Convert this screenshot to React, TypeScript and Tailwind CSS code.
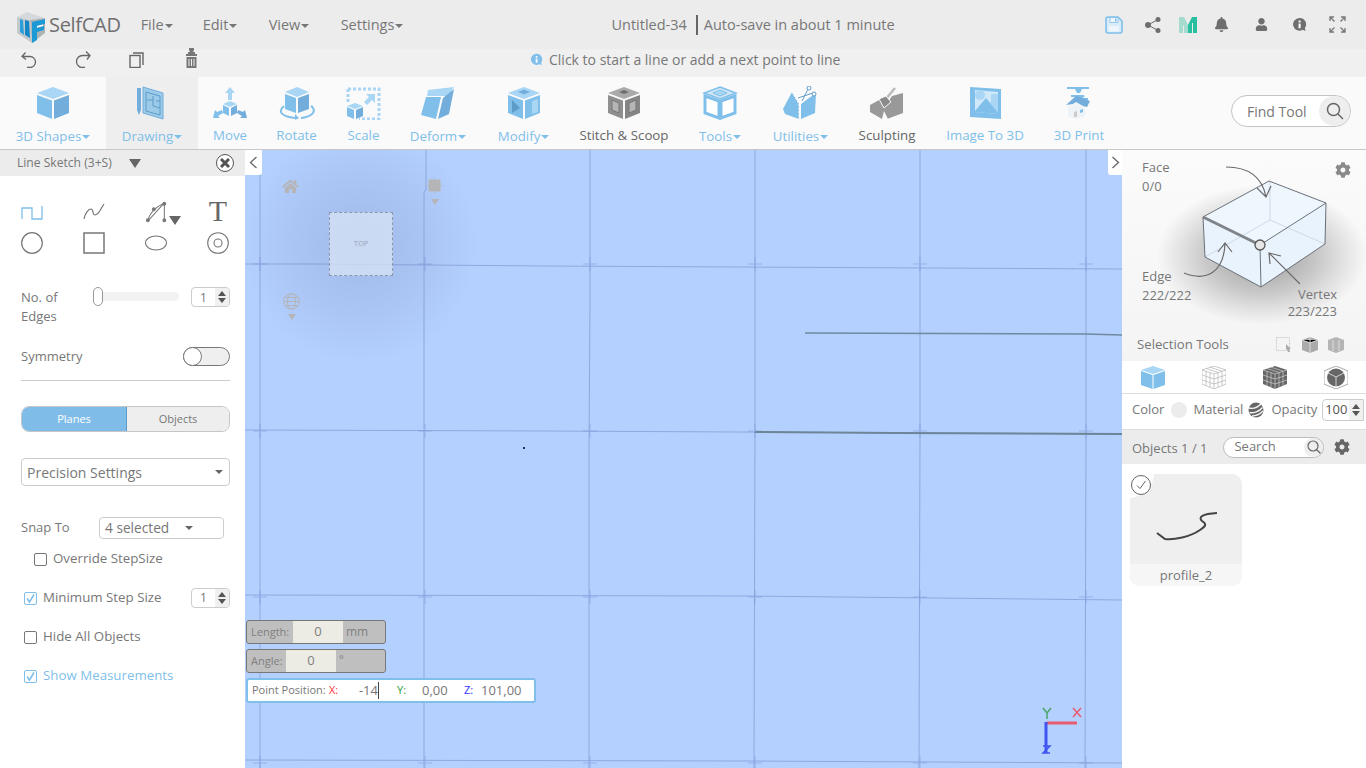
import { FaBell, FaCog, FaHome, FaUser } from "react-icons/fa";

const blue = "#7fbfea";
const light = "#a9d6f5";
const dark = "#72addb";
const grey = "#8f8f8f";

function Caret({ className = "" }: { className?: string }) {
  return <span className={`inline-block w-0 h-0 border-x-[4px] border-x-transparent border-t-[4px] border-t-current ml-[1px] align-middle ${className}`} />;
}

function CubeIcon() {
  return (
    <svg width="36" height="34" viewBox="0 0 36 34">
      <polygon points="18,1 34,7 18,13 2,7" fill={light} />
      <polygon points="2,9 17,14.5 17,33 2,27" fill={blue} />
      <polygon points="19,14.5 34,9 34,27 19,33" fill={dark} />
    </svg>
  );
}

function DrawingIcon() {
  return (
    <svg width="36" height="34" viewBox="0 0 36 34">
      <polygon points="9,1 29,7 29,33 9,27" fill="#9ccbea" stroke={dark} />
      <path d="M12 6l14 4v19l-14-4zM13 14h6v6M19 10v4M19 20l7 2M22 15h4" fill="none" stroke="#5d9bc8" strokeWidth="1" />
      <path d="M3 2h4v22l-2 5-2-5z" fill={dark} />
    </svg>
  );
}

function MoveIcon() {
  return (
    <svg width="36" height="34" viewBox="0 0 36 34">
      <path d="M18 1l5 6h-3v7h-4V7h-3z" fill={light} />
      <polygon points="18,15 25,18 18,21 11,18" fill={light} />
      <polygon points="11,19 17,22 17,30 11,27" fill={blue} />
      <polygon points="19,22 25,19 25,27 19,30" fill={dark} />
      <path d="M1 32l2-8 2 2 5-2 1 3-5 3 2 2z" fill={blue} />
      <path d="M35 32l-2-8-2 2-5-2-1 3 5 3-2 2z" fill={dark} />
    </svg>
  );
}

function RotateIcon() {
  return (
    <svg width="36" height="34" viewBox="0 0 36 34">
      <polygon points="18,1 30,6 18,11 6,6" fill={light} />
      <polygon points="6,8 17,12 17,27 6,23" fill={blue} />
      <polygon points="19,12 30,8 30,23 19,27" fill={dark} />
      <path d="M5 20c-6 5-3 9 5 11 4 1 7 1 9 1M22 32c9-1 15-5 12-10-.5-1-1-1.500-2-2" fill="none" stroke={blue} strokeWidth="2" />
      <path d="M16 28l4 4-4 2z" fill={blue} />
    </svg>
  );
}

function ScaleIcon() {
  return (
    <svg width="36" height="34" viewBox="0 0 36 34">
      <path d="M2 3h31v30H13M2 3v14" fill="none" stroke={light} strokeWidth="3" strokeDasharray="3 2" />
      <path d="M20 8h9v9l-3-3-5 5-3-3 5-5z" fill={light} />
      <polygon points="9,17 17,20 9,23 1,20" fill={light} />
      <polygon points="1,21 8,24 8,33 1,30" fill={blue} />
      <polygon points="10,24 17,21 17,30 10,33" fill={dark} />
    </svg>
  );
}

function DeformIcon() {
  return (
    <svg width="36" height="34" viewBox="0 0 36 34">
      <polygon points="8,4 34,1 28,10 7,10" fill={light} />
      <polygon points="6,11 21,11 16,33 1,29" fill={blue} />
      <polygon points="23,12 34,3 29,28 18,33" fill={dark} />
    </svg>
  );
}

function ModifyIcon() {
  return (
    <svg width="36" height="34" viewBox="0 0 36 34">
      <polygon points="18,1 34,7 18,13 2,7" fill={light} />
      <polygon points="12,6 18,3.500 24,6 18,8.500" fill={dark} />
      <polygon points="2,9 17,14.500 17,33 2,27" fill={blue} />
      <polygon points="6,14 14,22 6,27" fill="#5d9bc8" />
      <polygon points="19,14.500 34,9 34,27 19,33" fill={blue} />
      <polygon points="26,15 32,13 32,26 26,28" fill={light} />
    </svg>
  );
}

function StitchIcon() {
  return (
    <svg width="36" height="34" viewBox="0 0 36 34">
      <polygon points="18,1 34,7 18,13 2,7" fill="#aaa" />
      <polygon points="13,6 18,4 23,6 18,8" fill="#6e6e6e" />
      <polygon points="2,9 17,14.500 17,33 2,27" fill={grey} />
      <path d="M6 14l7 3v10l-7-3z" fill="#b5b5b5" stroke="#777" />
      <polygon points="19,14.500 34,9 34,27 19,33" fill="#858585" />
      <path d="M23 17l7-3v10l-7 3z" fill="#b5b5b5" stroke="#777" />
    </svg>
  );
}

function ToolsIcon() {
  return (
    <svg width="36" height="34" viewBox="0 0 36 34">
      <polygon points="18,1 34,7 18,13 2,7" fill="#cfe6f7" stroke={blue} strokeWidth="1.500" />
      <polygon points="11,7 18,4 25,7 18,10" fill={light} stroke={blue} />
      <polygon points="3,10 17,15 17,32 3,27" fill="#fff" stroke={blue} strokeWidth="3" />
      <polygon points="19,15 33,10 33,27 19,32" fill="#fff" stroke={blue} strokeWidth="3" />
    </svg>
  );
}

function UtilitiesIcon() {
  return (
    <svg width="36" height="34" viewBox="0 0 36 34">
      <polygon points="9,6 0,23 2,28 16,33 16,18" fill={blue} />
      <polygon points="18,18 26,12 33,7 32,27 18,33" fill={blue} />
      <path d="M9 6l7 12v15" stroke="#fff" strokeDasharray="2 1.500" fill="none" />
      <path d="M14 12l16-4M18 15l8-14" stroke="#fff" strokeWidth="3" />
      <path d="M15 12l15-5M19 15l7-14" stroke="#5d9bc8" strokeWidth="1" />
      <circle cx="31" cy="8" r="2" fill="#fff" stroke="#5d9bc8" />
      <circle cx="26" cy="2" r="2" fill="#fff" stroke="#5d9bc8" />
    </svg>
  );
}

function SculptIcon() {
  return (
    <svg width="36" height="34" viewBox="0 0 36 34">
      <path d="M1 19L12 13L17 19L23 10L34 7V27L18 33L13 33L1 26Z" fill="#999" />
      <path d="M16 14L26 2" stroke="#bbb" strokeWidth="2.500" />
      <polygon points="10,13 17,10 22,16 15,22" fill="#8a8a8a" stroke="#fafafa" />
      <path d="M13 33l2-8 4 8z" fill="#fafafa" />
    </svg>
  );
}

function ImageIcon() {
  return (
    <svg width="36" height="34" viewBox="0 0 36 34">
      <polygon points="3,1 34,3 34,33 3,31" fill={blue} />
      <polygon points="8,4 31,6 31,28 8,26" fill="#cfe8fa" />
      <path d="M8 25l11-13 12 14v2L8 26z" fill={blue} />
      <path d="M24 8h7v19l-7-9z" fill={light} />
      <circle cx="13" cy="9" r="5" fill={light} />
    </svg>
  );
}

function PrintIcon() {
  return (
    <svg width="36" height="34" viewBox="0 0 36 34">
      <path d="M6 1h22v2H21l-2 4h-3l-2-4H6z" fill={blue} />
      <path d="M10 10h13l-7 3h11" fill="none" stroke={blue} strokeWidth="2" />
      <polygon points="5,19 15,10 29,15 26,21 12,18" fill={dark} />
      <polygon points="7,21 15,16 24,21 24,30 15,33 7,30" fill="#eef3f7" />
      <path d="M13 26l3-1v6l-3 0z" fill="#ccc" />
      <path d="M19 24l3-1v3l-3 1z" fill={blue} />
    </svg>
  );
}

const tools = [
  { w: "w-[106px]", label: "3D Shapes", icon: <CubeIcon />, caret: true },
  { w: "w-[92px]", label: "Drawing", icon: <DrawingIcon />, caret: true, active: true },
  { w: "w-[64px]", label: "Move", icon: <MoveIcon /> },
  { w: "w-[69px]", label: "Rotate", icon: <RotateIcon /> },
  { w: "w-[65px]", label: "Scale", icon: <ScaleIcon /> },
  { w: "w-[84px]", label: "Deform", icon: <DeformIcon />, caret: true },
  { w: "w-[87px]", label: "Modify", icon: <ModifyIcon />, caret: true },
  { w: "w-[114px]", label: "Stitch & Scoop", icon: <StitchIcon />, dim: true },
  { w: "w-[78px]", label: "Tools", icon: <ToolsIcon />, caret: true },
  { w: "w-[83px]", label: "Utilities", icon: <UtilitiesIcon />, caret: true },
  { w: "w-[90px]", label: "Sculpting", icon: <SculptIcon />, dim: true },
  { w: "w-[106px]", label: "Image To 3D", icon: <ImageIcon /> },
  { w: "w-[82px]", label: "3D Print", icon: <PrintIcon /> },
];

function InfoBubble({ color, size }: { color: string; size: number }) {
  return (
    <svg width={size} height={size} viewBox="0 0 16 16">
      <path d="M8 1a6.800 6.800 0 1 0 3.500 12.600L14.500 15l-.8-3.200A6.800 6.800 0 0 0 8 1z" fill={color} />
      <rect x="7" y="7" width="2.200" height="5" fill="#fff" />
      <rect x="7" y="3.800" width="2.200" height="2" fill="#fff" />
    </svg>
  );
}

function Header() {
  return (
    <div className="h-[49px] bg-[#ececec] flex items-center text-[#777] shrink-0">
      <svg width="32" height="37" viewBox="0 0 32 37" className="ml-[16px] mt-[1px]">
        <polygon points="1,10 11,5 29,11 14,13" fill="#d6d9db" />
        <polygon points="1,10 14,13 16,36 1,26" fill="#c3c8cb" />
        <polygon points="14,13 29,11 29,26 16,36" fill="#aeb3b6" />
        <polygon points="4,12 7,13 8,28 4,25" fill="#2a9fdc" />
        <polygon points="9,13 13,14 14,31 9,28" fill="#1486c8" />
        <path d="M16 15l13-3v5l-8 2v2l7-2v4l-7 2v8l-5 3z" fill="#1c9ad6" />
        <path d="M21 19l6-1.500v1.500l-6 1.500z" fill="#fff" />
      </svg>
      <span className="text-[20px] tracking-[-0.3px] ml-[1px] text-[#6f6f6f] leading-none">SelfCAD</span>
      <div className="flex text-[14.500px] ml-[20px]">
        <span className="w-[62px]">File<Caret /></span>
        <span className="w-[66px]">Edit<Caret /></span>
        <span className="w-[72px]">View<Caret /></span>
        <span>Settings<Caret /></span>
      </div>
      <div className="flex items-center text-[14.500px] ml-[208px]">
        <span>Untitled-34</span>
        <span className="w-[2px] h-[20px] bg-[#666] ml-[9px] mr-[6px]" />
        <span>Auto-save in about 1 minute</span>
      </div>
      <div className="flex items-center ml-auto relative h-full w-[265px]">
        <svg width="18" height="18" viewBox="0 0 18 18" className="ml-[4px]">
          <path d="M1 3a2 2 0 0 1 2-2h10l4 4v10a2 2 0 0 1-2 2H3a2 2 0 0 1-2-2z" fill="#d9ecfa" stroke={blue} strokeWidth="1.600" />
          <rect x="4" y="10" width="10" height="5.500" fill="#eef6fc" />
          <rect x="5" y="1.500" width="8" height="5" fill="#eef6fc" stroke={blue} strokeWidth="0.800" />
          <rect x="10" y="2.500" width="1.500" height="3" fill={blue} />
        </svg>
        <svg width="18" height="18" viewBox="0 0 18 18" className="ml-[21px]">
          <path d="M14 3.500L4 9l10 5.500" fill="none" stroke="#6e6e6e" strokeWidth="1" />
          <circle cx="14" cy="3.500" r="2.500" fill="#6e6e6e" />
          <circle cx="4" cy="9" r="3" fill="#6e6e6e" />
          <circle cx="14" cy="14.500" r="2.500" fill="#6e6e6e" />
        </svg>
        <svg width="18" height="16" viewBox="0 0 18 16" className="ml-[17px]">
          <path d="M0 0h5l4 8v8H5V9L4 8v8H0z" fill="#a5dccf" />
          <path d="M18 0h-5L9 8v8h4V6h1v10h4z" fill="#27bfa0" />
        </svg>
        <FaBell size={15} color="#6e6e6e" className="ml-[17px]" />
        <FaUser size={13} color="#6e6e6e" className="ml-[26px]" />
        <span className="ml-[24px] flex"><InfoBubble color="#6e6e6e" size={15} /></span>
        <svg width="17" height="17" viewBox="0 0 17 17" className="ml-[22px]" fill="none" stroke="#777" strokeWidth="1.300">
          <path d="M1 5V1h4M1 1l4.500 4.500M12 1h4v4M16 1l-4.500 4.500M1 12v4h4M1 16l4.500-4.500M16 12v4h-4M16 16l-4.500-4.500" />
        </svg>
      </div>
    </div>
  );
}

function ActionBar() {
  return (
    <div className="h-[28px] bg-[#f0f0f0] flex items-center pb-[7px] text-[#777] shrink-0">
      <div className="flex pl-[2px]">
        <div className="w-[54px] flex justify-center">
          <svg width="16" height="17" viewBox="0 0 16 17" fill="none" stroke="#666" strokeWidth="1.300">
            <path d="M1 5.500h8a5.500 5.500 0 0 1 0 11H6M4.500 1.500L1 5.500l4 3" />
          </svg>
        </div>
        <div className="w-[54px] flex justify-center">
          <svg width="16" height="17" viewBox="0 0 16 17" fill="none" stroke="#666" strokeWidth="1.300">
            <path d="M15 4.500H7.500a6 6 0 0 0 0 12H10M11 .5l4 4-3 4" />
          </svg>
        </div>
        <div className="w-[54px] flex justify-center">
          <svg width="16" height="17" viewBox="0 0 16 17" fill="none" stroke="#666" strokeWidth="1.400">
            <rect x="1" y="4.500" width="10" height="12" />
            <path d="M4 2h10v12" />
          </svg>
        </div>
        <div className="w-[54px] flex justify-center -mt-[3px]">
          <svg width="13" height="21" viewBox="0 0 13 21">
            <path d="M4 0h5v2l-1 2h2v2H3V4h2L4 2z" fill="#777" />
            <rect x="1" y="6" width="11" height="2" fill="#777" />
            <path d="M1.500 9h10v11h-10z" fill="#777" />
            <path d="M4 11v7M6.500 11v7M9 11v7" stroke="#f0f0f0" strokeWidth="1" />
          </svg>
        </div>
      </div>
      <div className="flex items-center ml-[312px] text-[14px]">
        <InfoBubble color={blue} size={13} />
        <span className="ml-[6px]">Click to start a line or add a next point to line</span>
      </div>
    </div>
  );
}

function Toolbar() {
  return (
    <div className="h-[73px] bg-[#fafafa] border-b border-[#c8c8c8] flex shrink-0 relative">
      {tools.map((t) => (
        <div key={t.label} className={`${t.w} flex flex-col items-center pt-[9px] shrink-0 ${t.active ? "bg-[#eeeeee]" : ""}`}>
          <div className="h-[34px] flex items-center justify-center">{t.icon}</div>
          <span className={`text-[13.300px] leading-[18px] whitespace-nowrap ${t.caret ? "mt-[7px]" : "mt-[6px]"} ${t.dim ? "text-[#666]" : "text-[#7fbfea]"}`}>
            {t.label}
            {t.caret && <Caret />}
          </span>
        </div>
      ))}
      <div className="ml-auto mr-[15px] mt-[18px] w-[120px] h-[32px] rounded-full border border-[#c4c4c4] bg-white flex items-center overflow-hidden text-[14px] text-[#777]">
        <span className="pl-[15px]">Find Tool</span>
        <span className="ml-auto w-[31px] h-full bg-[#eeeeee] rounded-full flex items-center justify-center">
          <svg width="18" height="18" viewBox="0 0 18 18" fill="none" stroke="#666" strokeWidth="1.500">
            <circle cx="7.500" cy="7.500" r="6" />
            <path d="M12 12l5 5" />
          </svg>
        </span>
      </div>
    </div>
  );
}

function Stepper({ value, wide = false }: { value: string; wide?: boolean }) {
  return (
    <div className={`${wide ? "w-[42px] h-[22px] text-[13px] text-[#555] rounded-l-[4px]" : "w-[39px] h-[20px] text-[12px] text-[#777] rounded-[4px]"} border border-[#ccc] flex items-center overflow-hidden bg-white shrink-0`}>
      <span className="flex-1 text-center">{value}</span>
      <span className="w-[14px] h-full bg-[#f0f0f0] flex flex-col items-center justify-center gap-[2px]">
        <span className="w-0 h-0 border-x-[4px] border-x-transparent border-b-[5px] border-b-[#555]" />
        <span className="w-0 h-0 border-x-[4px] border-x-transparent border-t-[5px] border-t-[#555]" />
      </span>
    </div>
  );
}

function Check({ on, label, className = "" }: { on?: boolean; label: string; className?: string }) {
  return (
    <div className={`flex items-center h-[20px] text-[13.300px] ${className}`}>
      <span className={`w-[13px] h-[13px] border rounded-[2px] flex items-center justify-center mr-[6px] bg-white ${on ? "border-[#7fbfea]" : "border-[#777]"}`}>
        {on && (
          <svg width="11" height="11" viewBox="0 0 11 11" fill="none" stroke="#7fbfea" strokeWidth="1.600">
            <path d="M2 5.500l2.500 3.500L9 1.500" />
          </svg>
        )}
      </span>
      <span>{label}</span>
    </div>
  );
}

function LeftPanel() {
  return (
    <div className="w-[245px] shrink-0 bg-white text-[#777]">
      <div className="h-[26px] bg-[#ececec] flex items-center pl-[17px] pr-[11px] text-[12.100px]">
        <span>Line Sketch (3+S)</span>
        <span className="ml-[17px] w-0 h-0 border-x-[6px] border-x-transparent border-t-[9px] border-t-[#666]" />
        <span className="ml-auto w-[18px] h-[18px] rounded-full bg-white border-[1.500px] border-[#555] flex items-center justify-center">
          <svg width="10" height="10" viewBox="0 0 10 10" stroke="#555" strokeWidth="3">
            <path d="M1 1l8 8M9 1l-8 8" />
          </svg>
        </span>
      </div>
      <div className="pl-[21px] pr-[15px] pt-[24px]">
        <div className="flex justify-between w-[208px]">
          <svg width="22" height="22" viewBox="0 0 22 22" fill="none" stroke={blue} strokeWidth="1.300">
            <path d="M1 19V8h10v11h10V6" />
          </svg>
          <svg width="22" height="22" viewBox="0 0 22 22" fill="none" stroke="#777" strokeWidth="1.200">
            <path d="M1 19c1-5 4-10 7-10 3 0 1 6 4 6 4 0 6-7 9-11" />
          </svg>
          <span className="relative w-[22px] h-[22px]">
            <svg width="24" height="22" viewBox="0 0 24 24" fill="none" stroke="#777" strokeWidth="1.100" className="absolute left-0 top-[1px]">
              <path d="M2 22C3 14 10 7 20 2L20 22M2 22L20 2" />
              <circle cx="2" cy="21" r="1.500" fill="#777" />
              <circle cx="8.500" cy="9" r="1.500" fill="#777" />
              <circle cx="20" cy="3" r="1.500" fill="#777" />
              <circle cx="20" cy="21" r="1.500" fill="#777" />
            </svg>
            <span className="absolute left-[24px] top-[16px] w-0 h-0 border-x-[6px] border-x-transparent border-t-[9px] border-t-[#666]" />
          </span>
          <span className="w-[22px] h-[22px] font-['Liberation_Serif',serif] text-[30px] leading-[22px] text-center text-[#666]">T</span>
        </div>
        <div className="flex justify-between w-[208px] mt-[10px]">
          <svg width="22" height="22" viewBox="0 0 22 22" fill="none" stroke="#777" strokeWidth="1.200">
            <circle cx="11" cy="11" r="10.300" />
          </svg>
          <svg width="22" height="22" viewBox="0 0 22 22" fill="none" stroke="#777" strokeWidth="1.500">
            <rect x="1" y="1" width="20" height="20" />
          </svg>
          <svg width="22" height="22" viewBox="0 0 22 22" fill="none" stroke="#777" strokeWidth="1.100">
            <ellipse cx="11" cy="11" rx="10.500" ry="7" />
          </svg>
          <svg width="22" height="22" viewBox="0 0 22 22" fill="none" stroke="#777" strokeWidth="1.100">
            <circle cx="11" cy="11" r="10.300" />
            <circle cx="11" cy="11" r="4" />
          </svg>
        </div>

        <div className="flex items-start mt-[33px] h-[39px] text-[13px] leading-[19px]">
          <span className="w-[72px] pt-[1px]">No. of Edges</span>
          <span className="relative w-[86px] h-[9px] bg-[#f2f2f2] rounded-full mt-[5px]">
            <span className="absolute left-0 -top-[5px] w-[10px] h-[19px] rounded-[5px] border border-[#999] bg-white" />
          </span>
          <span className="ml-auto"><Stepper value="1" /></span>
        </div>

        <div className="flex items-center mt-[21px] h-[19px] text-[13px]">
          <span>Symmetry</span>
          <span className="ml-auto w-[47px] h-[19px] rounded-full border border-[#777] bg-[#efefef] relative">
            <span className="absolute -left-[1px] -top-[1px] w-[19px] h-[19px] rounded-full border border-[#777] bg-white" />
          </span>
        </div>
        <div className="mt-[14px] h-px bg-[#ccc]" />

        <div className="flex mt-[25px] h-[26px] text-[11px] rounded-[8px] overflow-hidden border border-[#c6c6c6]">
          <span className="w-[105px] bg-[#7fbde8] text-white flex items-center justify-center border-r border-[#5d9bc8]">Planes</span>
          <span className="flex-1 bg-[#eeeeee] flex items-center justify-center">Objects</span>
        </div>

        <div className="mt-[26px] h-[28px] border border-[#ccc] rounded-[4px] flex items-center pl-[5px] pr-[6px] text-[14px]">
          <span>Precision Settings</span>
          <Caret className="ml-auto text-[#666]" />
        </div>

        <div className="flex items-center mt-[31px] h-[22px] text-[13px]">
          <span className="w-[78px]">Snap To</span>
          <span className="w-[125px] h-[22px] border border-[#ccc] rounded-[4px] flex items-center pl-[5px] text-[13.700px]">
            4 selected
            <Caret className="ml-[16px] text-[#666]" />
          </span>
        </div>
        <Check label="Override StepSize" className="mt-[10px] ml-[13px]" />
        <div className="flex items-center mt-[19px] h-[20px]">
          <Check on label="Minimum Step Size" className="ml-[3px]" />
          <span className="ml-auto"><Stepper value="1" /></span>
        </div>
        <Check label="Hide All Objects" className="mt-[19px] ml-[3px]" />
        <Check on label="Show Measurements" className="mt-[19px] ml-[3px] text-[#7fbfea]" />
      </div>
    </div>
  );
}

function CanvasLines() {
  return (
    <svg className="absolute inset-0" width="877" height="618" viewBox="0 0 877 618" fill="none">
      <g stroke="#8fa8e0" strokeWidth="1">
        <path d="M15 0V618" />
        <path d="M181 0V40L179 42V618" />
        <path d="M345 0V150L344 300V618" />
        <path d="M510 0V280L509 618" />
        <path d="M675 0V290L674 618" />
        <path d="M841 0V290L840 618" />
        <path d="M0 114L70 114 300 116 877 119" />
        <path d="M0 280L300 281 877 284" />
        <path d="M0 445L500 446 877 450" />
        <path d="M0 610L500 611 877 613" />
      </g>
      <g stroke="#7f97d6">
        {[15, 180, 345, 510, 675, 841].flatMap((x, i) =>
          [114, 280, 445, 610].map((y, j) => (
            <path key={`${i}-${j}`} d={`M${x - 7} ${y + j}h14M${x} ${y + j - 7}v14`} strokeWidth="1.500" opacity="0.350" />
          ))
        )}
      </g>
      <path d="M560 183L840 184 877 185" stroke="#6f8a9e" strokeWidth="1.500" />
      <path d="M510 282L650 283 877 284" stroke="#6c8597" strokeWidth="2" />
      <rect x="278" y="297" width="2" height="2" fill="#1d2a6b" />
    </svg>
  );
}

function Canvas() {
  return (
    <div className="flex-1 relative bg-[#b4d0fe] overflow-hidden">
      <CanvasLines />
      <div className="absolute left-[-25px] top-[-35px] w-[280px] h-[260px] bg-[radial-gradient(circle,rgba(110,130,180,0.3),rgba(110,130,180,0.14)_35%,transparent_62%)]" />
      <div className="absolute left-0 top-0 w-[17px] h-[25px] bg-white rounded-br-[3px] flex items-center justify-center">
        <svg width="9" height="13" viewBox="0 0 9 13" fill="none" stroke="#666" strokeWidth="1.300"><path d="M7.500 1L1.500 6.500l6 5.500" /></svg>
      </div>
      <div className="absolute right-0 top-0 w-[14px] h-[25px] bg-white rounded-bl-[3px] flex items-center justify-center">
        <svg width="9" height="13" viewBox="0 0 9 13" fill="none" stroke="#666" strokeWidth="1.300"><path d="M1.500 1l6 5.500-6 5.500" /></svg>
      </div>
      <FaHome size={17} color="#b5b5b8" className="absolute left-[37px] top-[28px]" />
      <div className="absolute left-[181px] top-[27px] flex flex-col items-center">
        <svg width="17" height="17" viewBox="0 0 17 17">
          <path d="M8.500 0v17M0 8.500h17" stroke="#b5b5b8" strokeWidth="0.600" />
          <rect x="2.500" y="2.500" width="12" height="12" fill="#b5b5b8" />
        </svg>
        <span className="mt-[5px] w-0 h-0 border-x-[4px] border-x-transparent border-t-[6px] border-t-[#b5b5b8]" />
      </div>
      <div className="absolute left-[38px] top-[143px] flex flex-col items-center">
        <svg width="17" height="17" viewBox="0 0 17 17" fill="none" stroke="#b5b5b8">
          <circle cx="8.500" cy="8.500" r="7.800" />
          <ellipse cx="8.500" cy="8.500" rx="4" ry="7.800" />
          <path d="M1 8.500h15M2 4.500h13M2 12.500h13" />
        </svg>
        <span className="mt-[4px] w-0 h-0 border-x-[4px] border-x-transparent border-t-[6px] border-t-[#b5b5b8]" />
      </div>
      <div className="absolute left-[84px] top-[62px] w-[64px] h-[64px] bg-[#d8e4f6]/75 border border-dashed border-[#8d96ad] flex items-center justify-center text-[7.500px] text-[#98a2bd]">TOP</div>

      <div className="absolute left-[1px] top-[470px] flex flex-col gap-[5px] text-[#808080] text-[11px]">
        <div className="w-[140px] h-[24px] bg-[#bfbfbf] border border-[#777] rounded-[3px] flex items-center overflow-hidden">
          <span className="w-[46px] pl-[4px]">Length:</span>
          <span className="w-[50px] h-full bg-[#ecebe4] flex items-center justify-center text-[13px]">0</span>
          <span className="pl-[3px] text-[12px]">mm</span>
        </div>
        <div className="w-[140px] h-[24px] bg-[#bfbfbf] border border-[#777] rounded-[3px] flex items-center overflow-hidden">
          <span className="w-[39px] pl-[4px]">Angle:</span>
          <span className="w-[50px] h-full bg-[#ecebe4] flex items-center justify-center text-[13px]">0</span>
          <span className="pl-[3px] -mt-[4px]">°</span>
        </div>
        <div className="w-[290px] h-[25px] bg-white border-2 border-[#7fbfea] rounded-[3px] flex items-center text-[#777]">
          <span className="pl-[4px] w-[81px] text-[11px] whitespace-nowrap">Point Position:</span>
          <span className="text-[#f33] text-[11px] w-[16px]">X:</span>
          <span className="w-[22px] text-right text-[13px] ml-[12px] border-r border-[#444] leading-[17px]">-14</span>
          <span className="text-[#2a9a3a] text-[11px] ml-[18px] w-[10px]">Y:</span>
          <span className="text-[13px] ml-[15px] w-[28px]">0,00</span>
          <span className="text-[#33f] text-[11px] ml-[14px] w-[12px]">Z:</span>
          <span className="text-[13px] ml-[5px]">101,00</span>
        </div>
      </div>

      <svg className="absolute left-[795px] top-[556px]" width="45" height="50" viewBox="0 0 45 50">
        <path d="M7 17h30" stroke="#ea5a6e" strokeWidth="3" />
        <path d="M6 16v31" stroke="#3f55f0" strokeWidth="3" />
        <path d="M3 2l4 5 4-5M7 7v6" stroke="#4aa56a" strokeWidth="1.500" fill="none" />
        <path d="M33 2l8 9M41 2l-8 9" stroke="#ea5a6e" strokeWidth="1.500" />
        <path d="M3 40h7l-7 7h7" stroke="#3f55f0" strokeWidth="1.500" fill="none" />
      </svg>
    </div>
  );
}

function Gizmo() {
  return (
    <svg className="absolute left-0 top-0" width="244" height="185" viewBox="0 0 244 185" fill="none">
      <defs>
        <radialGradient id="gizmoShadow">
          <stop offset="0%" stopColor="#444" stopOpacity="0.550" />
          <stop offset="55%" stopColor="#555" stopOpacity="0.280" />
          <stop offset="100%" stopColor="#666" stopOpacity="0" />
        </radialGradient>
      </defs>
      <ellipse cx="140" cy="105" rx="105" ry="70" fill="url(#gizmoShadow)" />
      <polygon points="147,31 204,53 203,94 139,137 83,107 81,67" fill="#e9f3fd" />
      <polygon points="147,31 204,53 138,95 81,67" fill="#eef6fe" />
      <path d="M148 70L83 107M148 70L203 94M148 70V31" stroke="#cfd8e2" strokeWidth="1" />
      <path d="M81 67L147 31L204 53L138 95M204 53L203 94L139 137L83 107L81 67M138 95L139 137" stroke="#6b7178" strokeWidth="1" />
      <path d="M81 67L138 95" stroke="#808488" strokeWidth="3" />
      <circle cx="138" cy="95" r="5" fill="#e6e6e6" stroke="#555" strokeWidth="1.300" />
      <g stroke="#6a6a6a" strokeWidth="1.200">
        <path d="M104 17C125 17 140 26 144 47M135 38L144 47L149 36" />
        <path d="M62 123C85 132 102 122 103 93M96 102L103 93L110 102" />
        <path d="M178 134L147 103M148 114L147 103L159 106" />
      </g>
    </svg>
  );
}

function RightPanel() {
  return (
    <div className="w-[244px] shrink-0 bg-white text-[#777] flex flex-col">
      <div className="h-[211px] relative bg-gradient-to-b from-[#fbfbfb] to-[#f4f4f4] shrink-0 text-[13px] leading-[19px]">
        <Gizmo />
        <div className="absolute left-[20px] top-[8px]">Face<br />0/0</div>
        <div className="absolute left-[20px] top-[117px]">Edge<br />222/222</div>
        <div className="absolute right-[29px] top-[136px] text-right leading-[17px]">Vertex<br />223/223</div>
        <FaCog size={16} color="#8a8a8a" className="absolute left-[213px] top-[12px]" />
        <div className="absolute left-[15px] right-[22px] bottom-[7px] flex items-center text-[13.200px]">
          <span>Selection Tools</span>
          <svg width="16" height="16" viewBox="0 0 16 16" className="ml-auto">
            <rect x=".5" y=".5" width="13" height="13" fill="none" stroke="#ccc" strokeDasharray="2 1" />
            <path d="M10 7l5 5-2 0 1 3-2 0-1-3-1 1z" fill="#aaa" />
          </svg>
          <svg width="16" height="16" viewBox="0 0 16 16" className="ml-[10px]">
            <path d="M0 3l8-3 8 3v10l-8 3-8-3z" fill="#aaa" />
            <path d="M8 0v16M0 3l8 3 8-3" stroke="#ddd" />
          </svg>
          <svg width="16" height="16" viewBox="0 0 16 16" className="ml-[10px]">
            <path d="M0 3l8-3 8 3v10l-8 3-8-3z" fill="#b5b5b5" />
            <path d="M5 3v11M11 3v11" stroke="#ddd" />
          </svg>
        </div>
      </div>
      <div className="h-[33px] shrink-0 border-b border-[#ddd] flex items-center pl-[19px]">
        <svg width="24" height="23" viewBox="0 0 24 23">
          <polygon points="12,0 24,4 12,8 0,4" fill={light} />
          <polygon points="0,5 11.500,9 11.500,23 0,19" fill={blue} />
          <polygon points="12.500,9 24,5 24,19 12.500,23" fill={blue} />
        </svg>
        <svg width="24" height="23" viewBox="0 0 24 23" className="ml-[37px]" fill="none" stroke="#bbb" strokeWidth="0.800">
          <path d="M0 4l12-4 12 4v14l-12 5-12-5zM0 4l12 4 12-4M12 8v15M4 2.500l12 4M8 1.200l12 4M4 5.500v14M8 6.800v14.500M16 6.800v14.500M20 5.500v14M0 9l12 4 12-4M0 14l12 4 12-4" />
        </svg>
        <svg width="24" height="23" viewBox="0 0 24 23" className="ml-[37px]">
          <path d="M0 4l12-4 12 4v14l-12 5-12-5z" fill="#666" />
          <path d="M0 4l12 4 12-4M12 8v15M4 2.500l12 4M8 1.200l12 4M4 5.500v14M8 6.800v14.500M16 6.800v14.500M20 5.500v14M0 9l12 4 12-4M0 14l12 4 12-4" fill="none" stroke="#ddd" strokeWidth="0.600" />
        </svg>
        <svg width="24" height="23" viewBox="0 0 24 23" className="ml-[37px]">
          <path d="M0 5l12-5 12 5v13l-12 5-12-5z" fill="none" stroke="#aaa" />
          <circle cx="12" cy="11.500" r="9" fill="#666" />
          <path d="M12 11v11M4 7l8 4 8-4" stroke="#eee" strokeWidth="0.800" fill="none" />
        </svg>
      </div>
      <div className="h-[35px] shrink-0 flex items-center pl-[10px] pb-[4px] text-[13px]">
        <span>Color</span>
        <span className="ml-[7px] w-[16px] h-[16px] rounded-full bg-[#ececec]" />
        <span className="ml-[6px]">Material</span>
        <svg width="16" height="16" viewBox="0 0 16 16" className="ml-[5px]">
          <circle cx="8" cy="8" r="7.500" fill="#666" />
          <path d="M1 6c4 1 9-1 12-4M1.500 10.500c4 1 10-1 13-5M4 14c4 0 8-2 11-5" stroke="#f4f4f4" strokeWidth="1.300" fill="none" />
        </svg>
        <span className="ml-[7px]">Opacity</span>
        <span className="ml-[5px]"><Stepper value="100" wide /></span>
      </div>
      <div className="h-[35px] shrink-0 bg-[#ececec] flex items-center pl-[10px] pr-[16px] border-t border-[#ddd] text-[13px]">
        <span className="mt-[4px]">Objects 1 / 1</span>
        <span className="ml-[16px] w-[101px] h-[21px] bg-white rounded-full border border-[#bbb] flex items-center overflow-hidden">
          <span className="pl-[10px]">Search</span>
          <span className="ml-auto w-[19px] h-full bg-[#eee] rounded-full flex items-center justify-center">
            <svg width="14" height="14" viewBox="0 0 14 14" fill="none" stroke="#666" strokeWidth="1.200"><circle cx="6" cy="6" r="5" /><path d="M9.500 9.500l4 4" /></svg>
          </span>
        </span>
        <FaCog size={16} color="#666" className="ml-auto" />
      </div>
      <div className="pl-[8px] pt-[10px]">
        <div className="relative w-[112px] h-[112px] rounded-[10px] bg-[#efefef] overflow-hidden flex flex-col">
          <span className="absolute -left-[1px] -top-[1px] w-[25px] h-[25px] bg-white rounded-br-full" />
          <span className="absolute left-[1px] top-[1px] w-[20px] h-[20px] rounded-full border border-[#666] bg-white flex items-center justify-center">
            <svg width="12" height="12" viewBox="0 0 12 12" fill="none" stroke="#666" strokeWidth="1"><path d="M2 6.500l3 3L10.500 2" /></svg>
          </span>
          <svg width="112" height="90" viewBox="0 0 112 90" fill="none" stroke="#444" strokeWidth="2">
            <path d="M27 59L35 65C44 66 60 63 70 56C76 52 77 50 72 47C68 43 72 40 87 39" />
          </svg>
          <span className="flex-1 bg-[#f6f6f6] flex items-center justify-center text-[13px] pt-[1px]">profile_2</span>
        </div>
      </div>
    </div>
  );
}

export default function App() {
  return (
    <div className="w-[1366px] h-[768px] overflow-hidden flex flex-col font-['Open_Sans',sans-serif]">
      <Header />
      <ActionBar />
      <Toolbar />
      <div className="flex flex-1 min-h-0">
        <LeftPanel />
        <Canvas />
        <RightPanel />
      </div>
    </div>
  );
}
